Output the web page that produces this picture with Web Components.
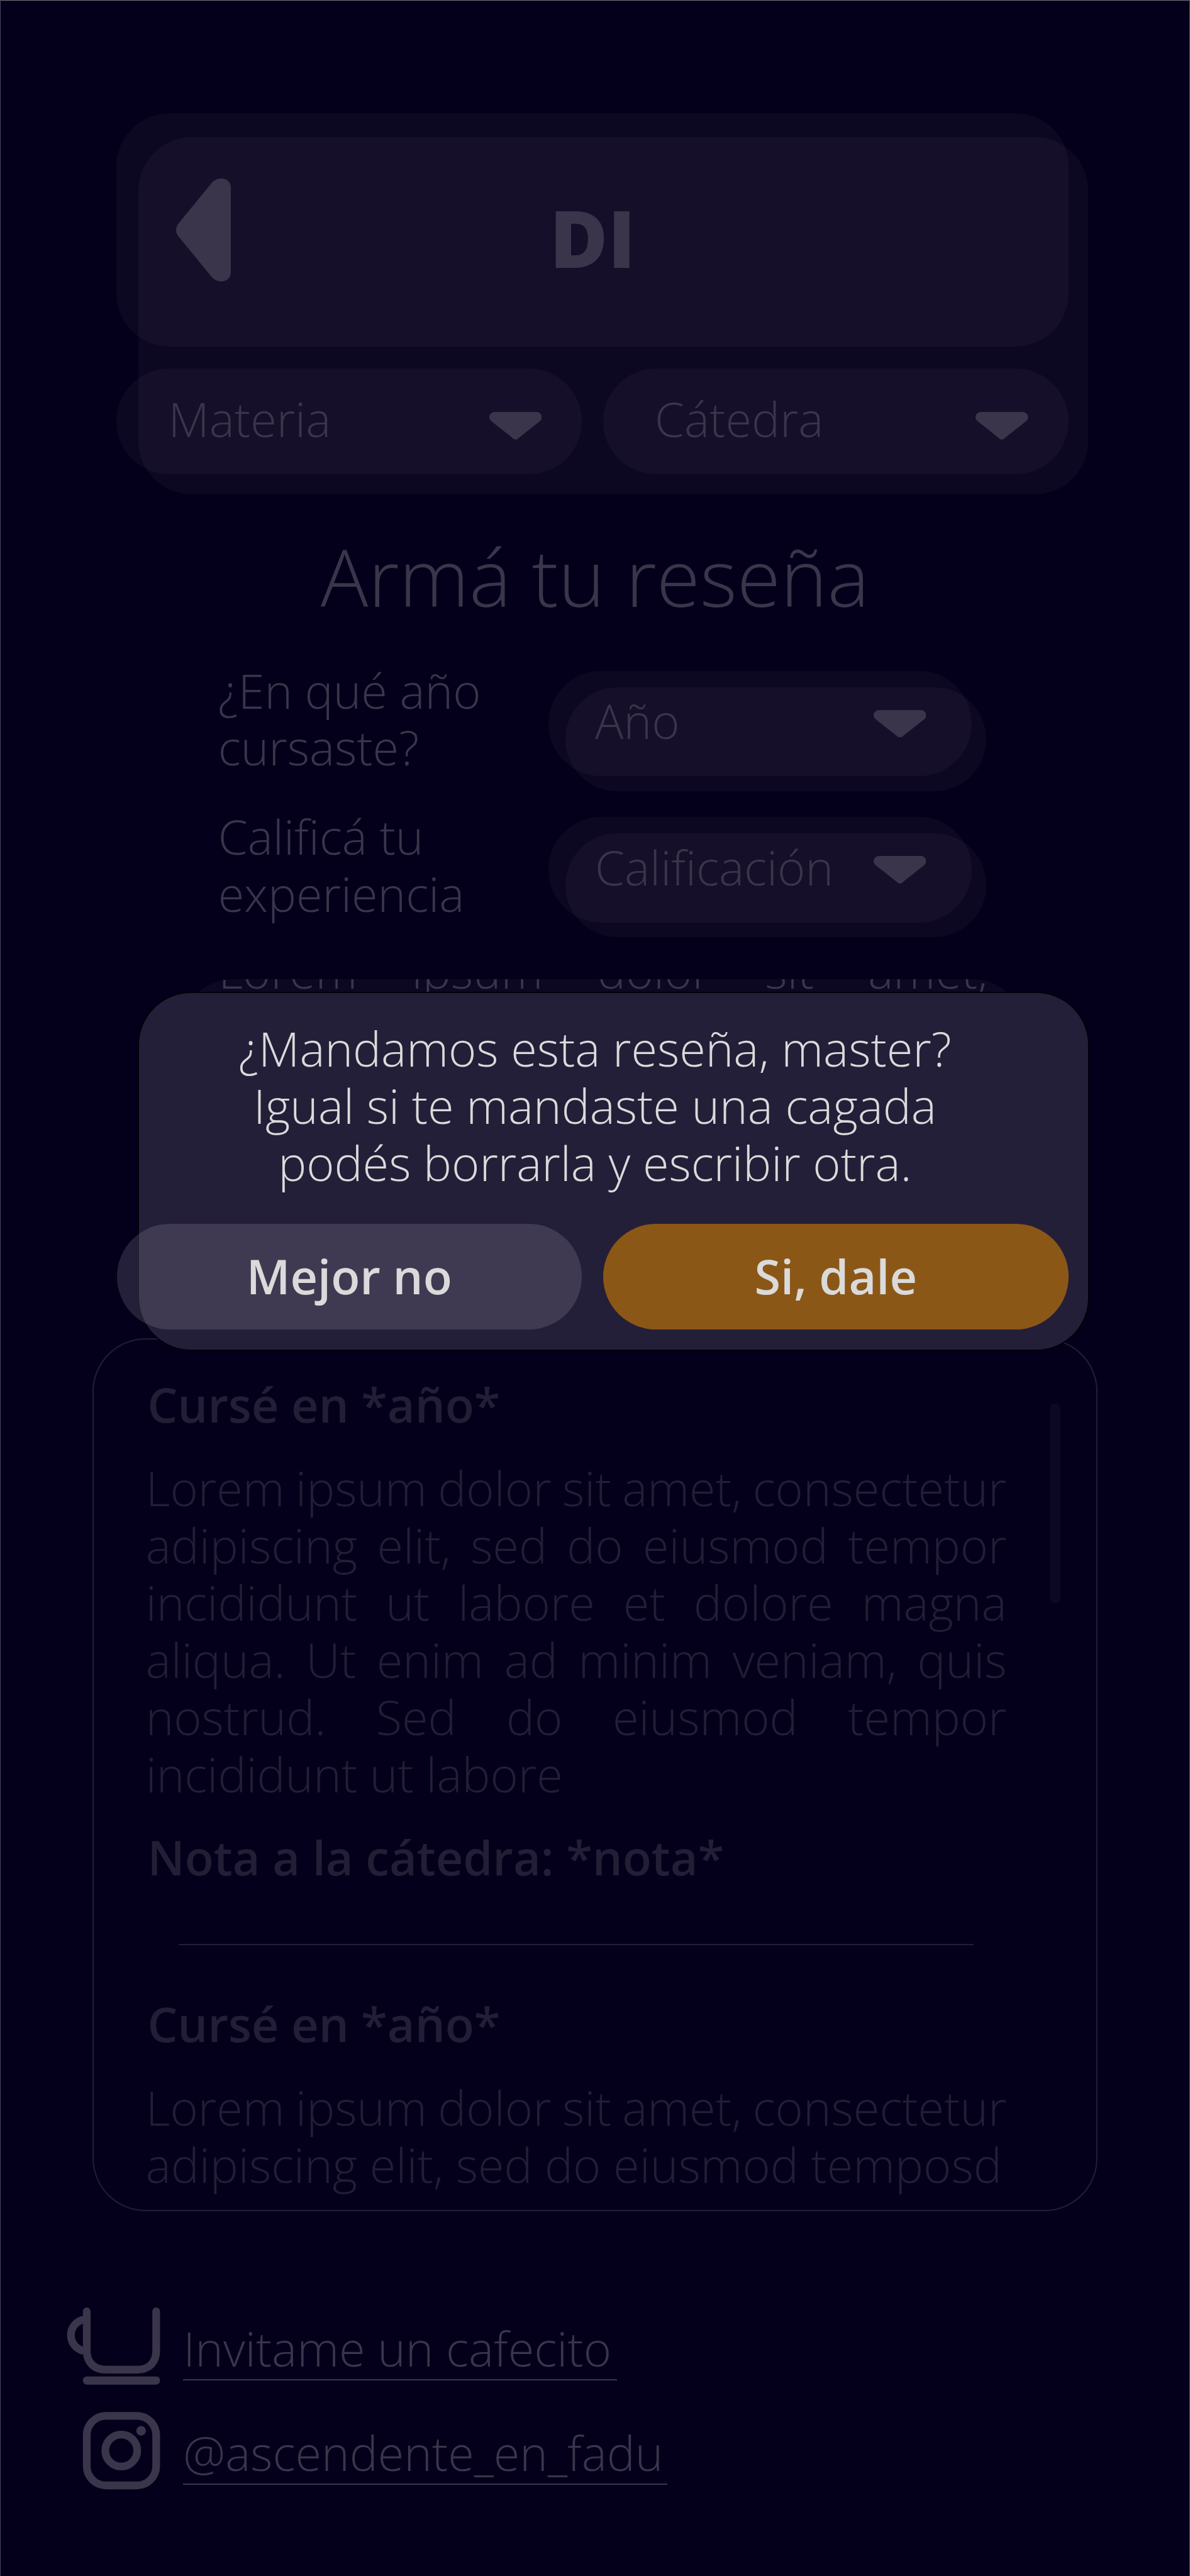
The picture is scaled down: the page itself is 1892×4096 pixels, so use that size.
<!DOCTYPE html>
<html lang="es">
<head>
<meta charset="utf-8">
<title>Armá tu reseña</title>
<style>
  /* 1rem = one hundred design units */
  html { font-size: 80.69px; background: #04001b; }
  body { margin: 0; }
</style>
</head>
<body>
<review-page></review-page>

<script>
const define = (name, css, html) => {
  const t = document.createElement('template');
  t.innerHTML = `<style>*{box-sizing:border-box}${css}</style>${html}`;
  customElements.define(name, class extends HTMLElement {
    constructor() {
      super();
      this.attachShadow({ mode: 'open' }).append(t.content.cloneNode(true));
    }
  });
};

define('caret-icon', `
  :host { display: block; width: 1.036rem; height: .543rem; flex: none; }
  svg { display: block; width: 100%; height: 100%; fill: var(--ink); }
`, `<svg viewBox="0 0 103.6 54.3"><path d="M11 0H92.6C98.5 0 103.6 4.5 103.6 10.5C103.6 14 101.5 16.7 98 19.6L58 51C54.5 55.3 49.1 55.3 45.6 51L5.6 19.6C2.1 16.7 0 14 0 10.5C0 4.5 5.1 0 11 0Z"/></svg>`);

define('pill-select', `
  :host { display: flex; align-items: center; justify-content: space-between; height: 2.085rem;
    padding: 0 .79rem 0 1.02rem; border-radius: 1.043rem; background: var(--veil); color: var(--ink); }
  span { padding-bottom: .092rem; }
  caret-icon { margin-top: .174rem; }
`, `<span><slot></slot></span><caret-icon></caret-icon>`);

define('stacked-select', `
  :host { display: flex; align-items: flex-start; width: 8.295rem; height: 2.04rem; border-radius: 1.02rem;
    background: var(--veil); color: var(--ink); }
  div { flex: none; display: flex; align-items: center; justify-content: space-between; width: 8.337rem; height: 2.08rem;
    margin: -.33rem 0 0 -.333rem; padding: 0 .902rem 0 .915rem; border-radius: 1.04rem; background: var(--veil); }
  span { padding-bottom: .088rem; }
`, `<div><span><slot></slot></span><caret-icon></caret-icon></div>`);

define('course-header', `
  :host { display: flex; flex-direction: column; width: 18.708rem; height: 7.04rem; margin-left: 2.73rem;
    border-radius: 1.05rem; background: var(--veil); }
  .bar { flex: none; display: grid; grid-template-columns: 1fr auto 1fr; align-items: start; width: 18.755rem; height: 4.592rem;
    margin: -.46rem 0 0 -.432rem; padding: 0 1.172rem; border-radius: 1.05rem; background: var(--veil); }
  .back { display: block; width: 1.08rem; height: 2.05rem; margin-top: 1.27rem; fill: var(--ink); }
  h1 { margin: 1.502rem 0 0; font-size: 1.5625rem; line-height: 1.2; font-weight: 800; }
  .filters { display: flex; gap: .42rem; margin: .429rem 0 0 -.435rem; width: 18.755rem; }
  ::slotted(*) { flex: 1; }
`, `<div class="bar">
  <svg class="back" viewBox="0 0 108 205"><path d="M70 10C80 -3 108 -4 108 21V184C108 209 80 208 70 195L4.5 115C-1.5 107 -1.5 98 4.5 90Z"/></svg>
  <h1><slot name="title"></slot></h1>
</div>
<div class="filters"><slot></slot></div>`);

define('form-row', `
  :host { display: flex; align-items: flex-start; padding-left: 4.298rem; height: 2.252rem; }
  label { width: 6.845rem; white-space: nowrap; }
  ::slotted(stacked-select) { margin-top: .502rem; }
`, `<label><slot name="label"></slot></label><slot></slot>`);

define('review-draft', `
  :host { display: block; height: 6.4rem; width: 16.65rem; margin-left: 3.55rem; padding: 0 .74rem 0 .755rem; overflow: hidden;
    border-radius: 1.04rem; background: var(--veil); }
  p { margin: -.733rem 0 0; text-align-last: justify; }
`, `<p><slot></slot></p>`);

define('review-entry', `
  :host { display: block; }
  h3 { margin: 0 0 0 .035rem; font-size: inherit; font-weight: 600; }
  .text { margin: .519rem 0; text-align: justify; text-align-last: justify; white-space: nowrap; }
  ::slotted([slot=rest]) { display: block; text-align-last: left; }
`, `<h3><slot name="year"></slot></h3>
<div class="text"><slot></slot><slot name="rest"></slot></div>
<h3><slot name="grade"></slot></h3>`);

define('review-list', `
  :host { display: flex; align-items: flex-start; width: 19.805rem; height: 17.205rem; margin-left: 1.823rem; overflow: hidden;
    border: 2px solid #231e36; border-radius: 1.05rem; color: #231e36; }
  .items { width: 16.965rem; margin: .727rem 0 0 1.023rem; }
  .thumb { width: .21rem; height: 3.93rem; margin: 1.27rem 0 0 .853rem; border-radius: .105rem; background: var(--veil); }
`, `<div class="items"><slot></slot></div><div class="thumb"></div>`);

define('list-divider', `
  :host { display: block; height: 2px; background: #231e36; margin: 1.145rem .65rem .985rem .645rem; }
`, ``);

define('social-link', `
  :host { display: flex; align-items: flex-start; height: 1.52rem; padding-left: 1.307rem; color: var(--ink); }
  .icon { width: 1.86rem; flex: none; margin-right: .443rem; }
  ::slotted(svg) { display: block; width: 1.86rem; height: 1.53rem; overflow: visible; }
  a { margin-top: .242rem; padding: 0 var(--tail, .1rem) .035rem 0; border-bottom: 2px solid var(--ink); white-space: nowrap; }
`, `<div class="icon"><slot name="icon"></slot></div><a><slot></slot></a>`);

define('pill-button', `
  :host { display: flex; align-items: center; justify-content: center; flex: 1; height: 2.082rem; padding-bottom: .03rem;
    border-radius: 1.041rem; background: var(--fill, rgba(225,219,236,.147)); font-weight: 600; }
`, `<slot></slot>`);

define('confirm-dialog', `
  :host { position: absolute; left: 2.72rem; top: 19.54rem; width: 18.745rem; height: 7.08rem; display: flex; flex-direction: column;
    border: 2px solid #020008; border-radius: 1.05rem; background: #241f38; color: #dadada; }
  p { margin: .54rem .74rem 0 0; text-align: center; white-space: nowrap; }
  .actions { display: flex; gap: .42rem; width: 18.75rem; margin: .638rem 0 0 -.445rem; }
`, `<p><slot></slot></p><div class="actions"><slot name="actions"></slot></div>`);

define('review-page', `
  :host { --ink: #3b354b; --veil: rgba(255,205,230,.038);
    display: flex; flex-direction: column; position: relative; box-sizing: border-box; height: 4096px; overflow: hidden; padding-top: 2.696rem;
    box-shadow: inset 1px 0 #4a465a, inset -1px 0 #5c5a68, inset 0 1px #74727e;
    background: #04001b; color: var(--ink); font: 300 .9375rem/1.126rem "Open Sans", sans-serif; }
  h2 { margin: .693rem 0 .742rem; font-size: 1.5625rem; line-height: 1.2; font-weight: 300; text-align: center; }
  form-row + form-row { margin-top: .626rem; }
  review-draft { margin-top: 1.126rem; }
  review-list { margin-top: .67rem; flex: none; }
  .tight { word-spacing: -.038rem; }
  footer { display: flex; flex-direction: column; gap: .538rem; margin-top: 1.9rem; }
  svg { fill: none; stroke: var(--ink); stroke-width: 15.2; }
`, `
<course-header>
  <span slot="title">DI</span>
  <pill-select>Materia</pill-select>
  <pill-select>Cátedra</pill-select>
</course-header>
<h2>Armá tu reseña</h2>
<form-row><span slot="label">¿En qué año<br>cursaste?</span><stacked-select>Año</stacked-select></form-row>
<form-row><span slot="label">Calificá tu<br>experiencia</span><stacked-select>Calificación</stacked-select></form-row>
<review-draft>Lorem ipsum dolor sit amet,</review-draft>
<review-list>
  <review-entry>
    <span slot="year">Cursé en *año*</span><span class="tight">Lorem ipsum dolor sit amet, consectetur</span><br>adipiscing elit, sed do eiusmod tempor<br>incididunt ut labore et dolore magna<br>aliqua. Ut enim ad minim veniam, quis<br>nostrud. Sed do eiusmod tempor<span slot="rest">incididunt ut labore</span>
    <span slot="grade">Nota a la cátedra: *nota*</span>
  </review-entry>
  <list-divider></list-divider>
  <review-entry>
    <span slot="year">Cursé en *año*</span><span class="tight">Lorem ipsum dolor sit amet, consectetur</span><span slot="rest">adipiscing elit, sed do eiusmod temposd</span>
  </review-entry>
</review-list>
<footer>
  <social-link style="--tail:.11rem">
    <svg slot="icon" viewBox="131 4547 186 153">
      <path stroke-linecap="round" d="M171.8 4554.6V4632C171.8 4656 187 4669.6 209.4 4669.6H271.5C294 4669.6 308.6 4656 308.6 4632V4554.6"/>
      <path d="M166 4570.8A31 31.3 0 0 0 166 4632.4"/>
      <rect x="164.2" y="4683" width="152" height="16" rx="7.5" fill="#3b354b" stroke="none"/>
    </svg>Invitame un cafecito</social-link>
  <social-link style="--tail:.08rem">
    <svg slot="icon" viewBox="131 4753 186 153">
      <rect x="171.8" y="4760.8" width="136.8" height="137.2" rx="38"/>
      <circle cx="239.8" cy="4829.3" r="31.5"/>
      <circle cx="279" cy="4790.3" r="9.5" fill="#3b354b" stroke="none"/>
    </svg>@ascendente_en_fadu</social-link>
</footer>
<confirm-dialog>¿Mandamos esta reseña, master?<br>Igual si te mandaste una cagada<br>podés borrarla y escribir otra.
  <pill-button slot="actions">Mejor no</pill-button>
  <pill-button slot="actions" style="--fill:#8b5717">Si, dale</pill-button>
</confirm-dialog>
`);
</script>
</body>
</html>
